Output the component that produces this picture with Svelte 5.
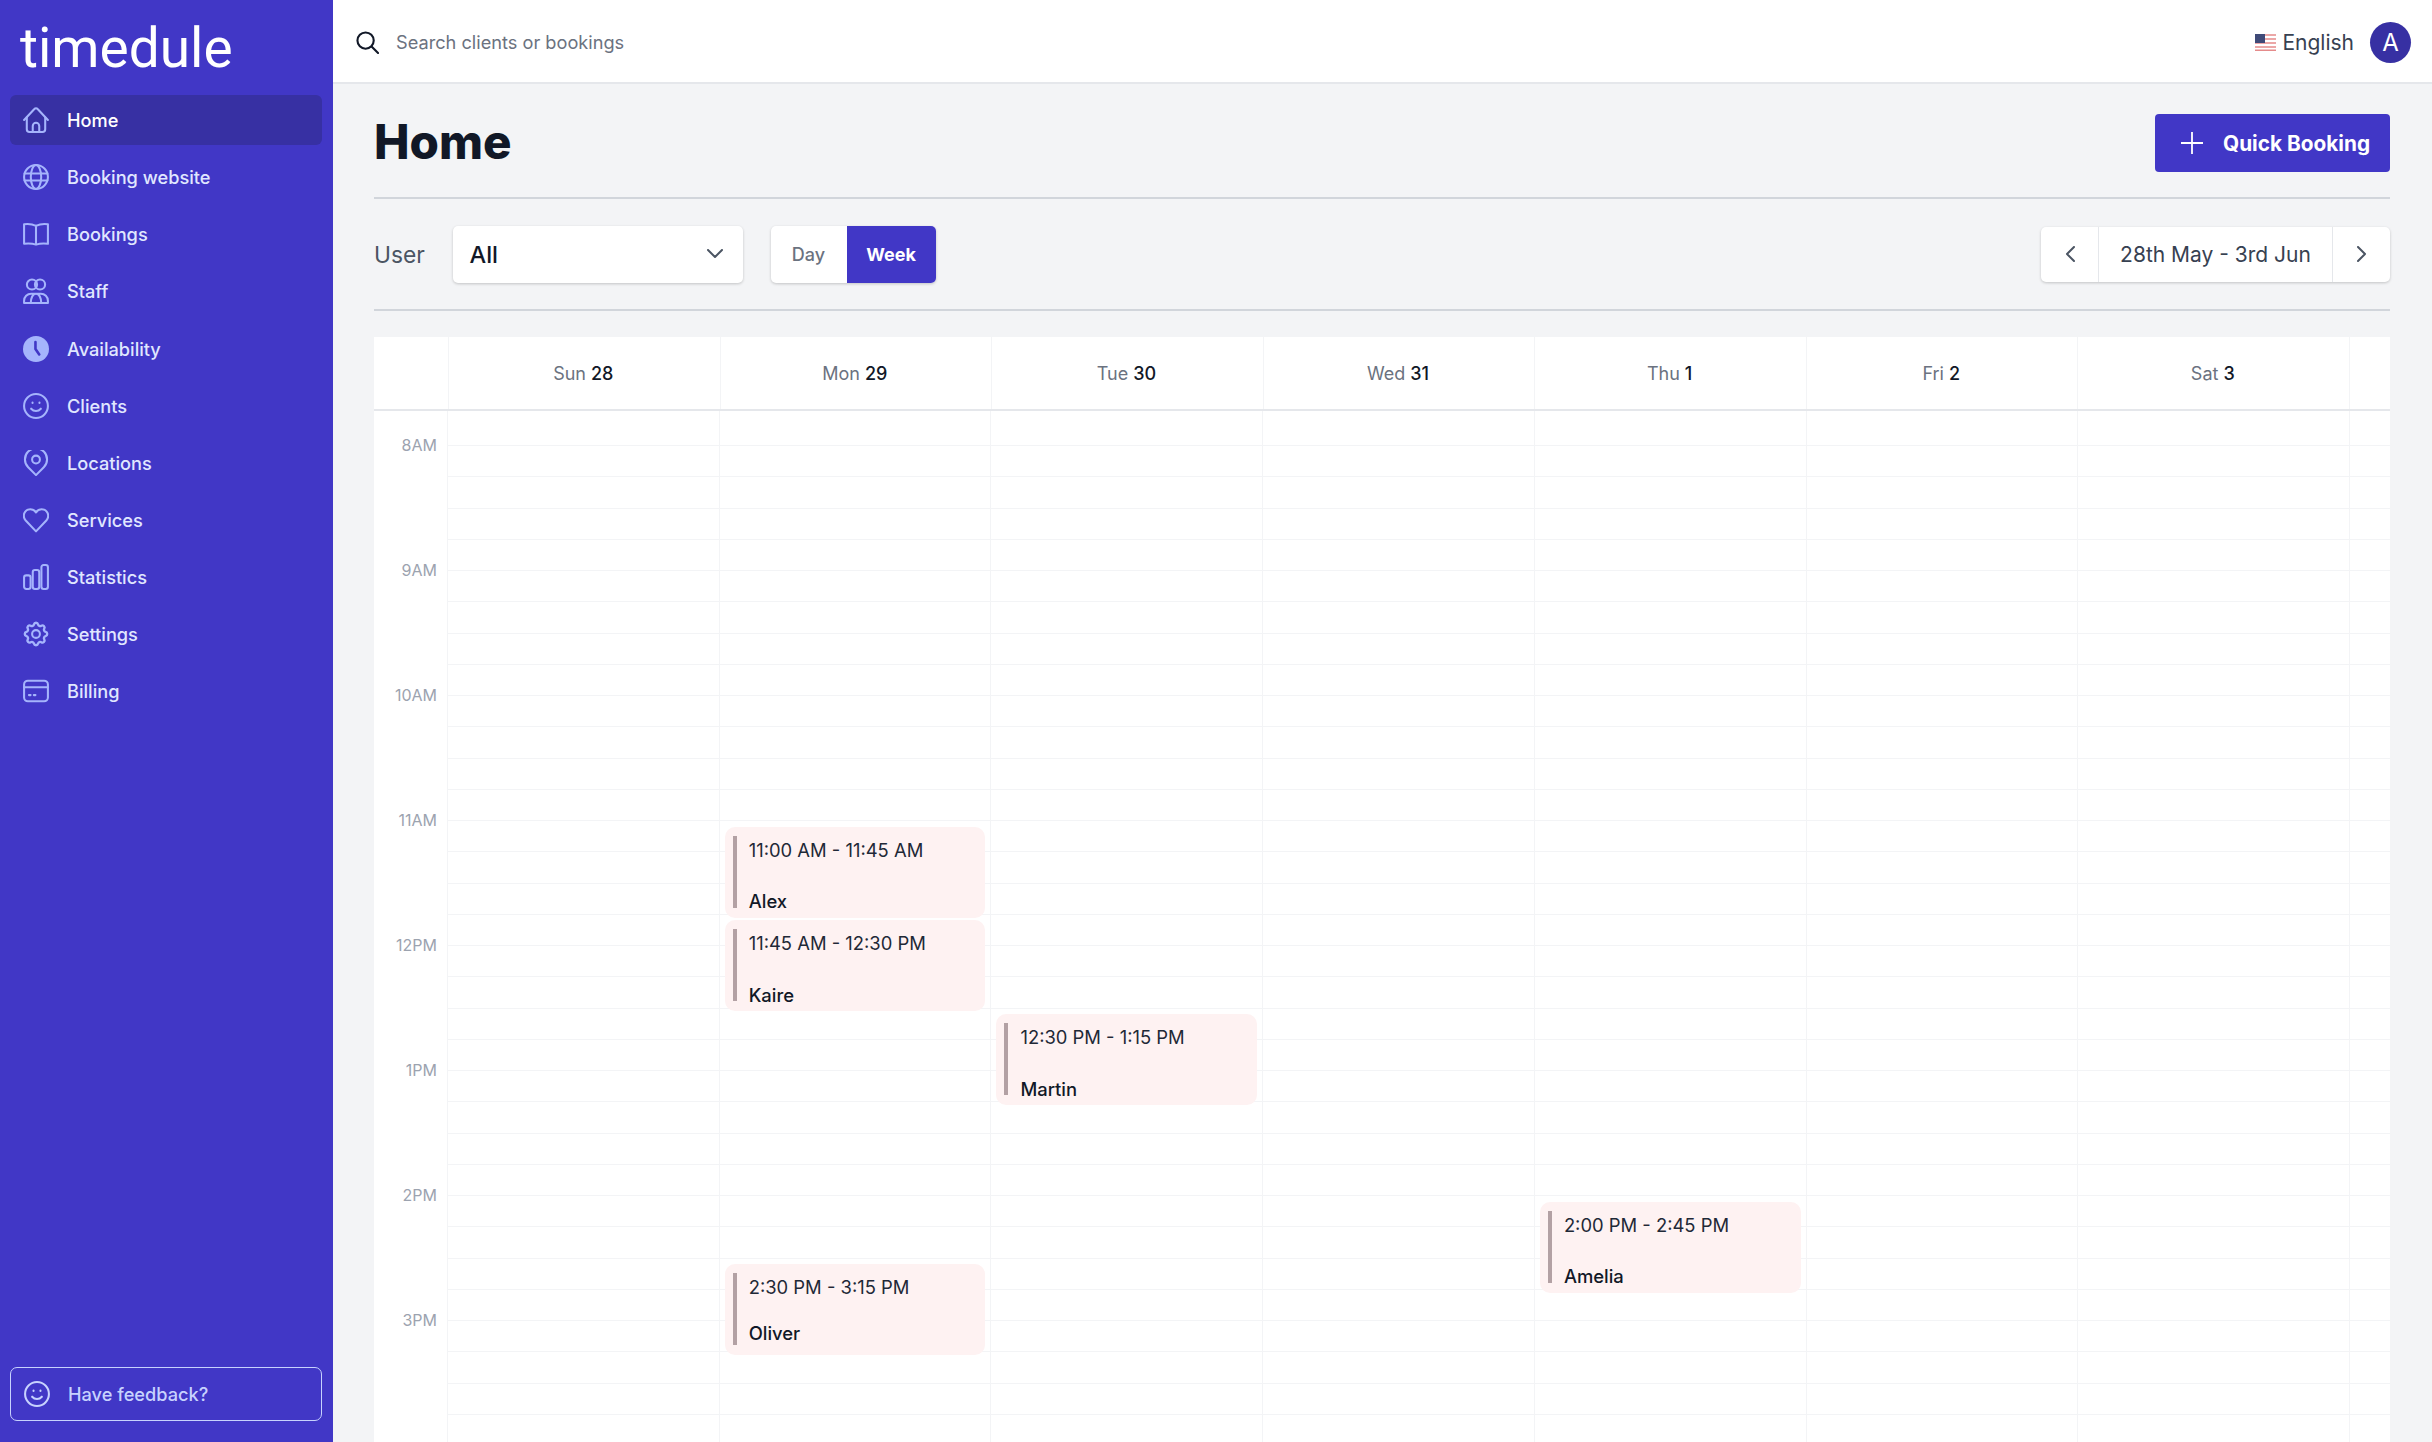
<script>
  const nav = [
    { label: "Home", icon: "home", active: true },
    { label: "Booking website", icon: "globe" },
    { label: "Bookings", icon: "book" },
    { label: "Staff", icon: "staff" },
    { label: "Availability", icon: "clock" },
    { label: "Clients", icon: "smile" },
    { label: "Locations", icon: "pin" },
    { label: "Services", icon: "heart" },
    { label: "Statistics", icon: "stats" },
    { label: "Settings", icon: "cog" },
    { label: "Billing", icon: "card" },
  ];

  const days = [
    { name: "Sun", num: 28, events: [] },
    {
      name: "Mon",
      num: 29,
      events: [
        { start: 11, time: "11:00 AM - 11:45 AM", who: "Alex" },
        { start: 11.75, time: "11:45 AM - 12:30 PM", who: "Kaire" },
        { start: 14.5, time: "2:30 PM - 3:15 PM", who: "Oliver", tight: true },
      ],
    },
    { name: "Tue", num: 30, events: [{ start: 12.5, time: "12:30 PM - 1:15 PM", who: "Martin" }] },
    { name: "Wed", num: 31, events: [] },
    { name: "Thu", num: 1, events: [{ start: 14, time: "2:00 PM - 2:45 PM", who: "Amelia" }] },
    { name: "Fri", num: 2, events: [] },
    { name: "Sat", num: 3, events: [] },
  ];

  const hours = ["8AM", "9AM", "10AM", "11AM", "12PM", "1PM", "2PM", "3PM"];
  const rows = Array.from({ length: 32 });
  const hourPx = 125;
  const firstLine = 34;
  const eventTop = (start) => firstLine + (start - 8) * hourPx + 6.5;
</script>

{#snippet smile()}
  <circle cx="12" cy="12" r="11" />
  <path d="M7.500 14.500c2.500 2.800 6.500 2.800 9 0" />
  <path d="M8.800 8.800v.5M15.200 8.800v.5" />
{/snippet}

<div class="app">
  <aside class="sidebar">
    <div class="logo">timedule</div>
    <nav class="nav">
      {#each nav as item}
        <div class="nav-item" class:active={item.active}>
          <svg class="nav-icon" viewBox="0 0 24 24">
            {#if item.icon === "home"}
              <path d="M1 12 10.500 1.800a2 2 0 0 1 3 0L23 12" />
              <path d="M3.500 9.500V20.500a2.500 2.500 0 0 0 2.500 2.500h12a2.500 2.500 0 0 0 2.500-2.500V9.500" />
              <path d="M9 23v-5.500a3 3 0 0 1 6 0V23" />
            {:else if item.icon === "globe"}
              <circle cx="12" cy="12" r="11" />
              <ellipse cx="12" cy="12" rx="4.800" ry="11" />
              <path d="M1.500 8.700h21M1.500 15.300h21" />
            {:else if item.icon === "book"}
              <path d="M12 4.500v17M12 4.500C9 3 5 2.500 1 3v18c3.800-.5 8-.2 11 .800 3-1 7.200-1.300 11-.800V3c-4-.5-8 0-11 1.500z" />
            {:else if item.icon === "staff"}
              <circle cx="8.300" cy="6" r="4.700" />
              <circle cx="15.700" cy="6" r="4.700" />
              <path d="M1 23v-2a6.500 6.500 0 0 1 6.500-6.500h9A6.500 6.500 0 0 1 23 21v2zM12 14.500c-3 0-4.800 4-4.800 8.500M12 14.500c3 0 4.800 4 4.800 8.500" />
            {:else if item.icon === "clock"}
              <circle class="solid" cx="12" cy="12" r="12" />
              <path class="hand" d="M11.500 5.500V12l3.500 5" />
            {:else if item.icon === "smile"}
              {@render smile()}
            {:else if item.icon === "pin"}
              <path d="M12 23.200 4.800 15.900a10.200 10.200 0 1 1 14.400 0z" />
              <circle cx="12" cy="8.800" r="3.600" />
            {:else if item.icon === "heart"}
              <path d="M12 22.500 2.500 12.500C-1 8.500 1.200 2 6.800 2c2.400 0 4.200 1.200 5.200 3 1-1.800 2.800-3 5.200-3 5.600 0 7.800 6.500 4.300 10.500z" />
            {:else if item.icon === "stats"}
              <rect x="1" y="10.500" width="6" height="12.500" rx="2" />
              <rect x="9" y="5.500" width="6" height="17.500" rx="2" />
              <rect x="17" y="1" width="6" height="22" rx="2" />
            {:else if item.icon === "cog"}
              <path transform="translate(-1.800 -1.800) scale(1.150)" d="M10.325 4.317c.426-1.756 2.924-1.756 3.350 0a1.724 1.724 0 0 0 2.573 1.066c1.543-.940 3.310.826 2.370 2.370a1.724 1.724 0 0 0 1.065 2.572c1.756.426 1.756 2.924 0 3.350a1.724 1.724 0 0 0-1.066 2.573c.940 1.543-.826 3.310-2.370 2.370a1.724 1.724 0 0 0-2.572 1.065c-.426 1.756-2.924 1.756-3.350 0a1.724 1.724 0 0 0-2.573-1.066c-1.543.940-3.310-.826-2.370-2.370a1.724 1.724 0 0 0-1.065-2.572c-1.756-.426-1.756-2.924 0-3.350a1.724 1.724 0 0 0 1.066-2.573c-.940-1.543.826-3.310 2.370-2.370.996.608 2.296.070 2.572-1.065z" />
              <circle cx="12" cy="12" r="3.600" />
            {:else if item.icon === "card"}
              <rect x="1" y="2.500" width="22" height="19" rx="3.500" />
              <path d="M1 8.500h22M5.500 15.800h1.500M10 15.800h1.500" />
            {/if}
          </svg>
          <span>{item.label}</span>
        </div>
      {/each}
    </nav>
    <div class="feedback">
      <svg class="nav-icon" viewBox="0 0 24 24">{@render smile()}</svg>
      <span>Have feedback?</span>
    </div>
  </aside>

  <div class="main">
    <header class="topbar">
      <svg class="search-icon" viewBox="0 0 24 24">
        <circle cx="10" cy="10" r="8.500" />
        <path d="m16.500 16.500 6.500 6.500" />
      </svg>
      <span class="search-text">Search clients or bookings</span>
      <div class="lang">
        <svg class="flag" viewBox="0 0 21 17">
          <rect width="21" height="17" fill="#fff" />
          <path d="M0 1h21M0 5h21M0 9h21M0 13h21M0 16.200h21" stroke="#e58b8b" stroke-width="1.500" />
          <rect width="10" height="9" fill="#3f4a78" />
        </svg>
        <span>English</span>
      </div>
      <div class="avatar">A</div>
    </header>

    <div class="content">
      <div class="title-row">
        <h1>Home</h1>
        <button class="quick">
          <svg class="plus" viewBox="0 0 22 22"><path d="M11 0v22M0 11h22" /></svg>
          Quick Booking
        </button>
      </div>

      <div class="filters">
        <span class="user-label">User</span>
        <div class="select">
          <span>All</span>
          <svg class="chevron" viewBox="0 0 16 10"><path d="m1 1 7 7 7-7" /></svg>
        </div>
        <div class="toggle">
          <span class="opt">Day</span>
          <span class="opt on">Week</span>
        </div>
        <div class="date-nav">
          <span class="arrow">
            <svg class="chevron side" viewBox="0 0 10 16"><path d="M9 1 2 8l7 7" /></svg>
          </span>
          <span class="range">28th May - 3rd Jun</span>
          <span class="arrow">
            <svg class="chevron side" viewBox="0 0 10 16"><path d="m1 1 7 7-7 7" /></svg>
          </span>
        </div>
      </div>

      <section class="calendar">
        <div class="cal-head">
          <div class="time-head"></div>
          {#each days as d}
            <div class="day-head">{d.name} <b>{d.num}</b></div>
          {/each}
          <div class="gutter"></div>
        </div>
        <div class="cal-body">
          <div class="times">
            {#each hours as h}
              <div class="hour">{h}</div>
            {/each}
          </div>
          {#each days as d}
            <div class="col">
              {#each rows as _}
                <div class="row"></div>
              {/each}
              {#each d.events as ev}
                <div class="event" style="top: {eventTop(ev.start)}px">
                  <div class="event-time">{ev.time}</div>
                  <div class="event-name" class:tight={ev.tight}>{ev.who}</div>
                </div>
              {/each}
            </div>
          {/each}
          <div class="col last">
            {#each rows as _}
              <div class="row"></div>
            {/each}
          </div>
        </div>
      </section>
    </div>
  </div>
</div>

<style>
  :global(body) {
    margin: 0;
    font-family: Inter, "Liberation Sans", sans-serif;
    background: #f3f4f6;
  }

  .app {
    display: flex;
    height: 1442px;
    overflow: hidden;
  }

  /* sidebar */
  .sidebar {
    box-sizing: border-box;
    width: 333px;
    flex-shrink: 0;
    display: flex;
    flex-direction: column;
    padding: 0 11px 21px 10px;
    background: #4137c6;
  }

  .logo {
    height: 95px;
    padding-left: 10px;
    font-family: Roboto, sans-serif;
    font-size: 55px;
    line-height: 96px;
    color: #fff;
  }

  .nav {
    display: flex;
    flex-direction: column;
    gap: 7.15px;
  }

  .nav-item {
    display: flex;
    align-items: center;
    gap: 18px;
    height: 50px;
    padding-left: 13px;
    border-radius: 6px;
    color: #e0e7ff;
    font-size: 18.200px;
    font-weight: 500;
  }

  .nav-item.active {
    background: #3730a3;
    color: #fff;
  }

  .nav-icon {
    width: 26px;
    height: 26px;
    flex-shrink: 0;
    fill: none;
    stroke: #a5b4fc;
    stroke-width: 1.900;
    stroke-linecap: round;
    stroke-linejoin: round;
  }

  .nav-icon .solid {
    fill: #a5b4fc;
    stroke: none;
  }

  .nav-icon .hand {
    stroke: #4137c6;
    stroke-width: 2.400;
  }

  .feedback {
    display: flex;
    align-items: center;
    gap: 18px;
    box-sizing: border-box;
    height: 54px;
    margin-top: auto;
    padding-left: 13px;
    border: 1.500px solid #c7d2fe;
    border-radius: 7px;
    color: #c7d2fe;
    font-size: 18.200px;
    font-weight: 500;
  }

  .feedback .nav-icon {
    stroke: #c7d2fe;
  }

  /* top bar */
  .main {
    flex: 1;
    min-width: 0;
    display: flex;
    flex-direction: column;
  }

  .topbar {
    box-sizing: border-box;
    height: 84px;
    flex-shrink: 0;
    display: flex;
    align-items: center;
    padding: 2px 21px 0 23px;
    background: #fff;
    border-bottom: 2px solid #e5e7eb;
  }

  .search-icon {
    width: 23px;
    height: 23px;
    fill: none;
    stroke: #111827;
    stroke-width: 2.200;
    stroke-linecap: round;
  }

  .search-text {
    margin-left: 17px;
    font-size: 18.200px;
    color: #6b7280;
  }

  .lang {
    display: flex;
    align-items: center;
    gap: 6px;
    margin-left: auto;
    font-size: 21px;
    color: #374151;
  }

  .flag {
    width: 21px;
    height: 17px;
  }

  .avatar {
    width: 41px;
    height: 41px;
    margin-left: 16px;
    border-radius: 50%;
    background: #3730a3;
    color: #fff;
    font-size: 24px;
    line-height: 41px;
    text-align: center;
  }

  /* page content */
  .content {
    flex: 1;
    min-height: 0;
    display: flex;
    flex-direction: column;
    padding: 0 42px 0 41px;
  }

  .title-row {
    box-sizing: border-box;
    height: 115px;
    display: flex;
    align-items: center;
    justify-content: space-between;
    padding-top: 5px;
    border-bottom: 2px solid #d1d5db;
  }

  h1 {
    margin: 0 0 4px;
    font-size: 47.500px;
    font-weight: 800;
    color: #111827;
  }

  .quick {
    display: flex;
    align-items: center;
    gap: 20px;
    box-sizing: border-box;
    width: 235px;
    height: 58px;
    padding: 0 0 0 26px;
    border: none;
    border-radius: 4px;
    background: #4137c6;
    color: #fff;
    font-family: inherit;
    font-size: 20.800px;
    font-weight: 700;
  }

  .plus {
    width: 22px;
    height: 22px;
    fill: none;
    stroke: #fff;
    stroke-width: 1.800;
  }

  .filters {
    box-sizing: border-box;
    height: 112px;
    display: flex;
    align-items: center;
    border-bottom: 2px solid #d1d5db;
  }

  .user-label {
    width: 78.500px;
    font-size: 22.800px;
    color: #4b5563;
  }

  .select {
    box-sizing: border-box;
    width: 290px;
    height: 57px;
    display: flex;
    align-items: center;
    justify-content: space-between;
    padding: 0 20px 0 17px;
    border-radius: 5px;
    background: #fff;
    box-shadow: 0 1px 3px rgba(0, 0, 0, 0.2);
    font-size: 23.500px;
    font-weight: 500;
    color: #111827;
  }

  .chevron {
    width: 16px;
    height: 10px;
    fill: none;
    stroke: #4b5563;
    stroke-width: 2;
    stroke-linecap: round;
    stroke-linejoin: round;
  }

  .chevron.side {
    width: 10px;
    height: 16px;
  }

  .toggle {
    display: flex;
    height: 57px;
    margin-left: 28px;
    border-radius: 5px;
    background: #fff;
    box-shadow: 0 1px 3px rgba(0, 0, 0, 0.2);
    overflow: hidden;
  }

  .opt {
    width: 76px;
    display: flex;
    align-items: center;
    justify-content: center;
    font-size: 18px;
    font-weight: 500;
    color: #6b7280;
  }

  .opt.on {
    width: 89px;
    background: #4137c6;
    color: #fff;
    font-weight: 700;
  }

  .date-nav {
    display: flex;
    height: 55px;
    margin-left: auto;
    border-radius: 5px;
    background: #fff;
    box-shadow: 0 1px 3px rgba(0, 0, 0, 0.2);
  }

  .arrow {
    width: 57px;
    display: flex;
    align-items: center;
    justify-content: center;
  }

  .range {
    width: 233px;
    display: flex;
    align-items: center;
    justify-content: center;
    border-left: 1px solid #e5e7eb;
    border-right: 1px solid #e5e7eb;
    font-size: 21px;
    color: #374151;
  }

  /* calendar */
  .calendar {
    flex: 1;
    min-height: 0;
    margin-top: 26px;
    background: #fff;
    overflow: hidden;
  }

  .cal-head {
    height: 74px;
    display: flex;
    box-sizing: border-box;
    border-bottom: 2px solid #e5e7eb;
  }

  .time-head {
    width: 74px;
    flex-shrink: 0;
    border-right: 1px solid #f3f4f6;
  }

  .day-head {
    flex: 1;
    display: flex;
    align-items: center;
    justify-content: center;
    gap: 5px;
    padding-right: 2px;
    border-right: 1px solid #f3f4f6;
    font-size: 18px;
    color: #6b7280;
  }

  .day-head b {
    font-weight: 500;
    color: #111827;
  }

  .gutter {
    width: 40px;
    flex-shrink: 0;
  }

  .cal-body {
    display: flex;
  }

  .times {
    box-sizing: border-box;
    width: 74px;
    flex-shrink: 0;
    padding: 24px 10px 0 0;
    border-right: 1px solid #f3f4f6;
  }

  .hour {
    height: 125px;
    line-height: 20px;
    font-size: 16px;
    text-align: right;
    color: #9ca3af;
  }

  .col {
    flex: 1;
    position: relative;
    min-width: 0;
    padding-top: 34px;
    border-right: 1px solid #f3f4f6;
  }

  .col.last {
    flex: none;
    width: 40px;
    border-right: none;
  }

  .row {
    box-sizing: border-box;
    height: 31.25px;
    border-top: 1px solid #f3f4f6;
  }

  .event {
    position: absolute;
    left: 5px;
    right: 5px;
    box-sizing: border-box;
    height: 91px;
    padding: 12px 8px 0 24px;
    border-radius: 10px;
    background: #fef2f2;
    font-size: 18.400px;
    line-height: 22px;
    color: #1f2937;
  }

  .event::before {
    content: "";
    position: absolute;
    left: 8px;
    top: 9px;
    bottom: 10px;
    width: 4px;
    background: #b3a1a4;
  }

  .event-name {
    margin-top: 29.500px;
    font-weight: 500;
    color: #111827;
  }

  .event-name.tight {
    margin-top: 23.500px;
  }
</style>
